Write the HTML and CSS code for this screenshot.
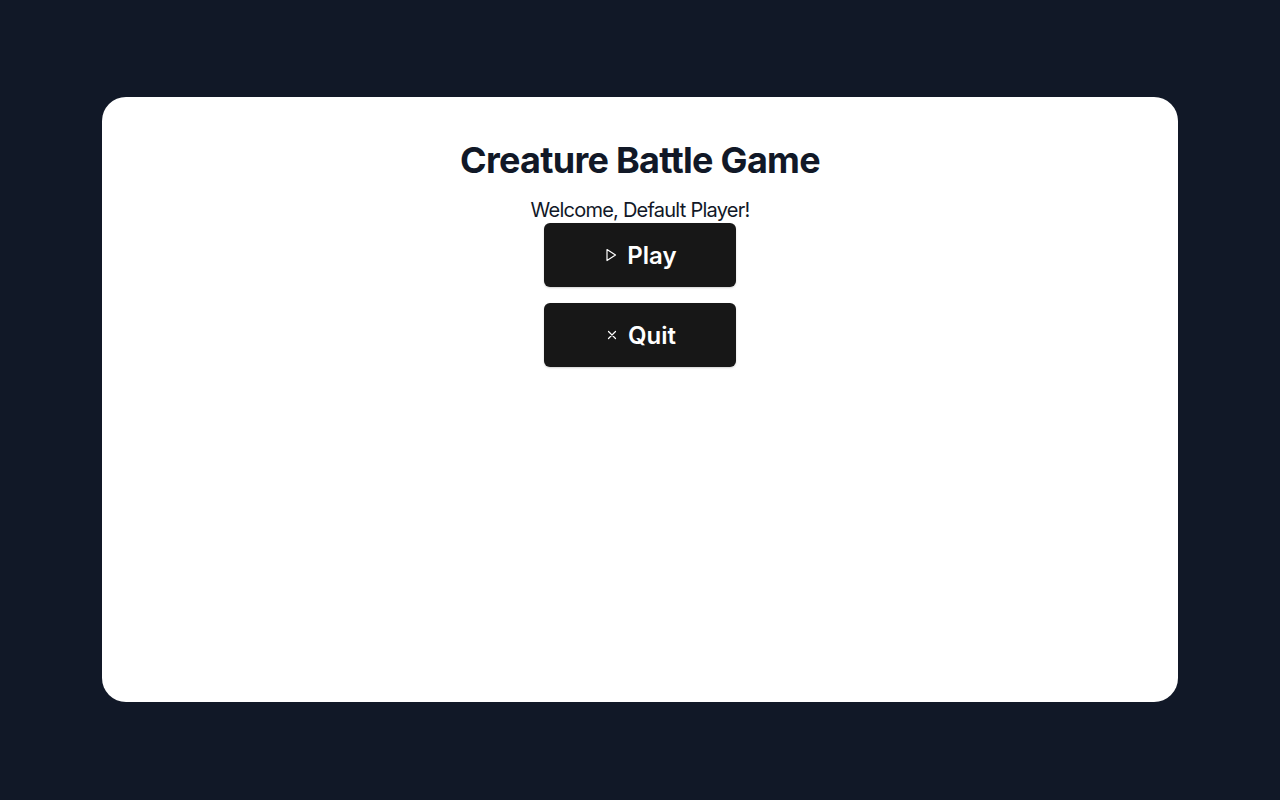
FILE: index.html
```html
<!DOCTYPE html>
<html lang="en">
<head>
<meta charset="utf-8">
<title>Creature Battle Game</title>
<link rel="stylesheet" href="styles.css">
</head>
<body>
<main class="screen">
  <section class="card">
    <h1 class="title">Creature Battle Game</h1>
    <p class="welcome">Welcome, Default Player!</p>
    <div class="menu">
      <button class="btn" type="button">
        <svg class="icon" viewBox="0 0 16 16" width="16" height="16" fill="none" stroke="currentColor" stroke-width="1.2" stroke-linejoin="round"><polygon points="4 2.5 12.5 8 4 13.5 4 2.5"/></svg>
        <span>Play</span>
      </button>
      <button class="btn" type="button">
        <svg class="icon" viewBox="0 0 16 16" width="16" height="16" fill="none" stroke="currentColor" stroke-width="1.2" stroke-linecap="round"><path d="M4.5 4.5l7 7M11.5 4.5l-7 7"/></svg>
        <span>Quit</span>
      </button>
    </div>
  </section>
</main>
</body>
</html>
```
FILE: styles.css
```css
* { box-sizing: border-box; }
html, body {
  margin: 0;
  padding: 0;
  height: 100%;
}
body {
  background: #111827;
  font-family: Inter, "Noto Sans", sans-serif;
}
.screen {
  height: 800px;
  padding-top: 97px;
  display: flex;
  justify-content: center;
}
.card {
  width: 1076px;
  height: 605px;
  background: #ffffff;
  border-radius: 24px;
  padding-top: 43px;
  display: flex;
  flex-direction: column;
  align-items: center;
}
.title {
  margin: 0 0 17px;
  font-size: 36px;
  line-height: 40px;
  font-weight: 700;
  letter-spacing: -0.02em;
  color: #111827;
}
.welcome {
  margin: 0;
  font-size: 20px;
  line-height: 26px;
  letter-spacing: -0.038em;
  color: #111827;
}
.menu {
  display: flex;
  flex-direction: column;
  gap: 16px;
}
.btn {
  width: 192px;
  height: 64px;
  background: #171717;
  color: #ffffff;
  border: none;
  border-radius: 6px;
  box-shadow: 0 1px 2px rgba(0,0,0,0.18);
  display: flex;
  align-items: center;
  justify-content: center;
  gap: 8px;
  font-family: Inter, "Noto Sans", sans-serif;
  font-size: 24px;
  font-weight: 600;
  padding: 0;
}
.icon { flex: none; }
```
